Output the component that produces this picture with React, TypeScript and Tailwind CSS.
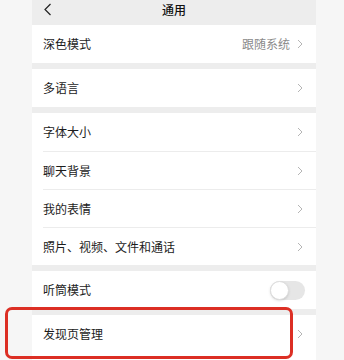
import React from "react";

const font = { fontFamily: '"Noto Sans CJK SC", "Noto Sans", sans-serif' };

function Chevron() {
  return (
    <svg width="6" height="10" viewBox="0 0 6 10" className="shrink-0">
      <polyline points="1,1 5,5 1,9" fill="none" stroke="#b5b5b5" strokeWidth="1" />
    </svg>
  );
}

function Row({ label, value, divider, toggle }: { label: string; value?: string; divider?: boolean; toggle?: boolean }) {
  return (
    <div className="bg-white h-[38px] pl-[11px] flex">
      <div className={`flex-1 flex items-center pr-[13px] ${divider ? "border-t border-[#ececec]" : ""}`}>
        <span className="flex-1 text-[12px] text-[#1c1c1c]">{label}</span>
        {value && <span className="text-[12px] text-[#8a8a8a] mr-[7px]">{value}</span>}
        {toggle ? (
          <div className="w-[35px] h-[19px] rounded-full bg-[#e6e6e6] flex items-center -mr-[2px]">
            <div className="w-[19px] h-[19px] rounded-full bg-white border border-[#dedede] shadow-sm" />
          </div>
        ) : (
          <Chevron />
        )}
      </div>
    </div>
  );
}

export default function App() {
  return (
    <div className="relative w-[344px] h-[360px] overflow-hidden bg-[#f6f6f6]" style={font}>
      <div className="ml-[32px] w-[284px] h-full bg-[#ededed] flex flex-col">
        <div className="h-[25px] flex items-start pt-[3px] px-[11px] relative">
          <svg width="9" height="13" viewBox="0 0 9 13">
            <polyline points="7.5,1 2,6.5 7.5,12" fill="none" stroke="#222" strokeWidth="1.2" />
          </svg>
          <span className="absolute left-0 right-0 top-[1px] text-center text-[12px] font-medium text-[#111]">通用</span>
        </div>
        <Row label="深色模式" value="跟随系统" />
        <div className="h-[6px]" />
        <Row label="多语言" />
        <div className="h-[6px]" />
        <Row label="字体大小" />
        <Row label="聊天背景" divider />
        <Row label="我的表情" divider />
        <Row label="照片、视频、文件和通话" divider />
        <div className="h-[6px]" />
        <Row label="听筒模式" toggle />
        <div className="h-[6px]" />
        <Row label="发现页管理" />
        <div className="bg-white flex-1" />
      </div>
      <div className="absolute left-[5px] top-[307px] w-[288px] h-[52px] border-[3px] border-[#dc2f24] rounded-[7px]" />
    </div>
  );
}
